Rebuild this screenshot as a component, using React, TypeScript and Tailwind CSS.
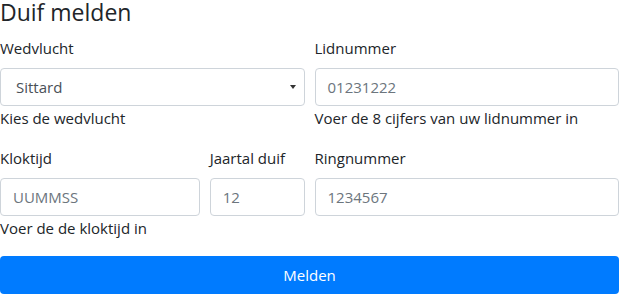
import React from "react";

const font = { fontFamily: '"Open Sans", "Liberation Sans", sans-serif' };

function Field({
  label,
  value,
  placeholder,
  help,
  className,
}: {
  label: string;
  value?: string;
  placeholder?: string;
  help?: string;
  className: string;
}) {
  return (
    <div className={`${className} mb-4`}>
      <label className="mb-2 block h-6 leading-6">{label}</label>
      <div className="flex h-[38px] items-center rounded border border-[#ced4da] bg-white px-3">
        {value ? (
          <span className="text-[#495057]">{value}</span>
        ) : (
          <span className="text-[#6c757d]">{placeholder}</span>
        )}
      </div>
      {help && <div className="h-6 leading-6">{help}</div>}
    </div>
  );
}

export default function App() {
  return (
    <div className="w-[619px] bg-white text-[15px] text-[#212529]" style={font}>
      <h4 className="mb-2 h-7 text-[23px] leading-[25px] font-normal">Duif melden</h4>

      <div className="grid grid-cols-12 gap-x-[10px]">
        {/* Wedvlucht select */}
        <div className="col-span-6 mb-4">
          <label className="mb-2 block h-6 leading-6">Wedvlucht</label>
          <div className="flex h-[38px] items-center justify-between rounded border border-[#ced4da] bg-white pl-[15px] pr-[7px]">
            <span className="text-[#495057]">Sittard</span>
            <svg width="6" height="4" viewBox="0 0 6 4" className="mr-[1px]">
              <path d="M0 0h6L3 4z" fill="#333" />
            </svg>
          </div>
          <div className="h-6 leading-6">Kies de wedvlucht</div>
        </div>

        <Field
          className="col-span-6"
          label="Lidnummer"
          placeholder="01231222"
          help="Voer de 8 cijfers van uw lidnummer in"
        />

        <Field
          className="col-span-4"
          label="Kloktijd"
          placeholder="UUMMSS"
          help="Voer de de kloktijd in"
        />
        <Field className="col-span-2" label="Jaartal duif" placeholder="12" />
        <Field className="col-span-6" label="Ringnummer" placeholder="1234567" />
      </div>

      <button className="flex h-[38px] w-full items-center justify-center rounded bg-[#007bff] text-white">
        Melden
      </button>
    </div>
  );
}
